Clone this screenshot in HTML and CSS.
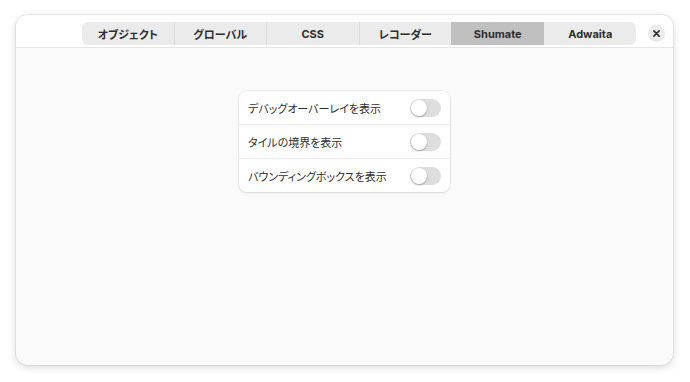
FILE: index.html
```html
<!DOCTYPE html>
<html lang="ja">

<head>
    <meta charset="UTF-8">
    <title>Inspector</title>
    <link rel="stylesheet" href="styles.css">
</head>

<body>
    <div class="window">
        <div class="header">
            <div class="tabs">
                <div class="tab">オブジェクト</div>
                <div class="tab">グローバル</div>
                <div class="tab">CSS</div>
                <div class="tab">レコーダー</div>
                <div class="tab active">Shumate</div>
                <div class="tab">Adwaita</div>
            </div>
            <div class="close">
                <svg width="7" height="7" viewBox="0 0 8 8">
                    <path d="M1 1 L7 7 M7 1 L1 7" stroke="#2e2e2e" stroke-width="1.8" stroke-linecap="round" />
                </svg>
            </div>
        </div>
        <div class="content">
            <div class="list">
                <div class="row">
                    <span>デバッグオーバーレイを表示</span>
                    <div class="switch"><div class="knob"></div></div>
                </div>
                <div class="row">
                    <span>タイルの境界を表示</span>
                    <div class="switch"><div class="knob"></div></div>
                </div>
                <div class="row">
                    <span>バウンディングボックスを表示</span>
                    <div class="switch"><div class="knob"></div></div>
                </div>
            </div>
        </div>
    </div>
</body>

</html>
```

FILE: styles.css
```css
body {
    font-family: Inter, "Noto Sans CJK JP", sans-serif;
    font-feature-settings: "palt";
    margin: 0;
    padding: 15px 16px 16px 16px;
    background-color: #fff;
}

.window {
    width: 657px;
    height: 350px;
    border-radius: 12px;
    background-color: #fafafa;
    box-shadow: 0 0 0 1px rgba(0, 0, 0, 0.06), 0 2px 8px rgba(0, 0, 0, 0.16);
    overflow: hidden;
    display: flex;
    flex-direction: column;
}

.header {
    height: 33px;
    background-color: #fff;
    border-bottom: 1px solid #e6e6e6;
    display: flex;
    align-items: flex-start;
    padding-top: 7px;
    box-sizing: border-box;
    flex-shrink: 0;
}

.tabs {
    display: flex;
    width: 554px;
    margin-left: 66px;
    background-color: #ebebeb;
    border-radius: 6px;
    overflow: hidden;
    height: 23px;
}

.tab {
    flex: 1;
    box-sizing: border-box;
    display: flex;
    align-items: center;
    justify-content: center;
    font-size: 11px;
    font-weight: 700;
    color: #2e2e2e;
    border-left: 1px solid #dcdcdc;
}

.tab:first-child {
    border-left: none;
}

.tab.active {
    background-color: #c0c0c0;
    border-left-color: #c0c0c0;
}

.tab.active + .tab {
    border-left-color: #ebebeb;
}

.close {
    width: 17px;
    height: 17px;
    border-radius: 50%;
    background-color: #ebebeb;
    margin-left: 12px;
    margin-top: 3px;
    display: flex;
    align-items: center;
    justify-content: center;
}

.content {
    flex: 1;
    display: flex;
    justify-content: center;
    align-items: flex-start;
    padding-top: 43px;
}

.list {
    width: 211px;
    background-color: #fff;
    border-radius: 8px;
    box-shadow: 0 0 0 1px rgba(0, 0, 0, 0.04), 0 1px 3px rgba(0, 0, 0, 0.1);
}

.row {
    height: 34px;
    box-sizing: border-box;
    display: flex;
    align-items: center;
    justify-content: space-between;
    padding: 0 9px;
    font-size: 11px;
    color: #2e2e2e;
    border-top: 1px solid #ececec;
}

.row:first-child {
    height: 33px;
    border-top: none;
}

.switch {
    width: 31px;
    height: 18px;
    border-radius: 9px;
    background-color: #dedede;
    position: relative;
}

.knob {
    position: absolute;
    left: 1px;
    top: 1px;
    width: 16px;
    height: 16px;
    border-radius: 50%;
    background-color: #fff;
    box-shadow: 0 1px 2px rgba(0, 0, 0, 0.3);
}
```
